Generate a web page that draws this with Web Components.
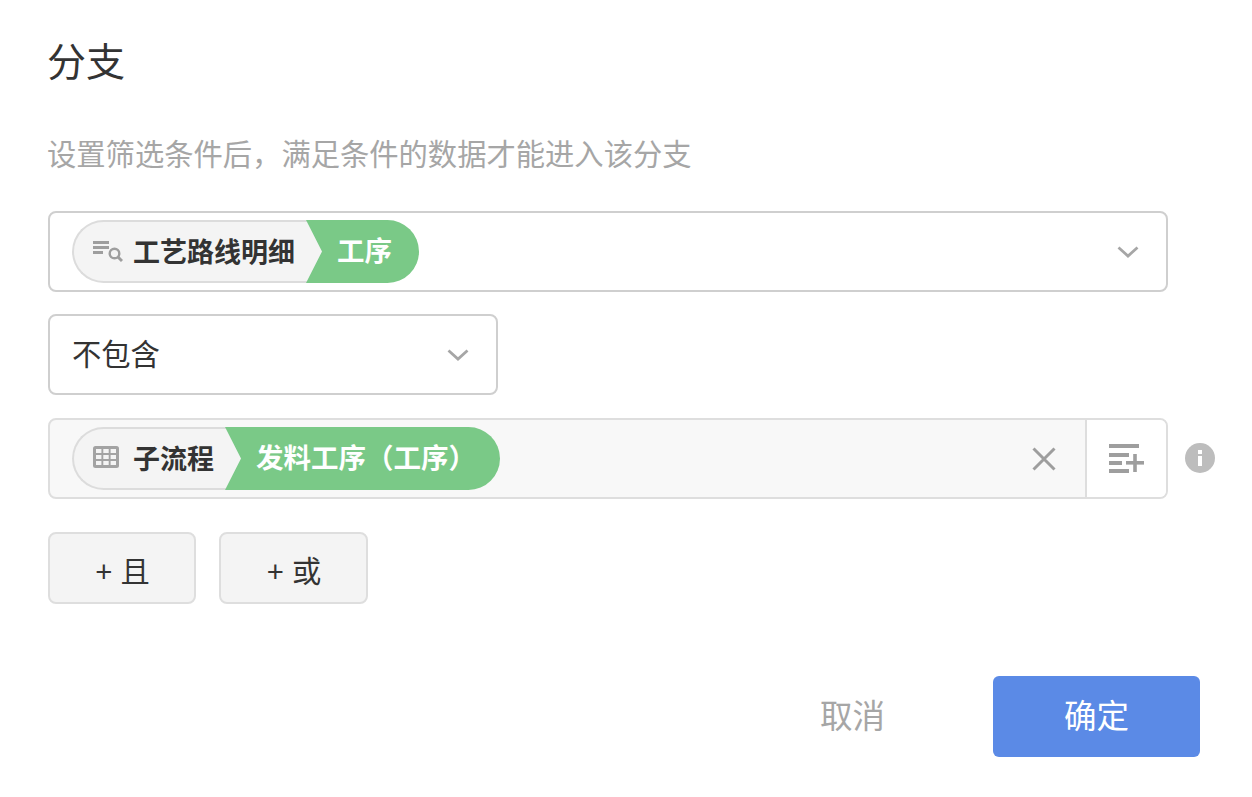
<!DOCTYPE html>
<html lang="zh">
<head>
<meta charset="utf-8">
<title>分支</title>
<style>
html, body { margin: 0; background: #fff; }
body { font-family: "Liberation Sans", "Noto Sans CJK SC", sans-serif; color: #333; }
</style>
</head>
<body>
<branch-dialog></branch-dialog>
<script>
const ICONS = {
    search: '<svg width="30" height="24" viewBox="0 0 30 24"><g fill="#9e9e9e"><rect x="0" y="1" width="16" height="3"/><rect x="0" y="6" width="16" height="3"/><rect x="0" y="11" width="10" height="3"/></g><circle cx="21.5" cy="13.5" r="4.8" fill="none" stroke="#9e9e9e" stroke-width="2.4"/><path d="M25 17l4 4" stroke="#9e9e9e" stroke-width="3"/></svg>',
    table: '<svg width="26" height="22" viewBox="0 0 26 22"><rect width="26" height="22" rx="2.5" fill="#a3a3a3"/><g fill="#f4f4f4"><rect x="3" y="3" width="5.4" height="4"/><rect x="10.3" y="3" width="5.4" height="4"/><rect x="17.6" y="3" width="5.4" height="4"/><rect x="3" y="9" width="5.4" height="4"/><rect x="10.3" y="9" width="5.4" height="4"/><rect x="17.6" y="9" width="5.4" height="4"/><rect x="3" y="15" width="5.4" height="4"/><rect x="10.3" y="15" width="5.4" height="4"/><rect x="17.6" y="15" width="5.4" height="4"/></g></svg>',
    chevron: '<svg width="22" height="12" viewBox="0 0 22 12"><path d="M1.5 1.5L11 10l9.5-8.5" fill="none" stroke="#a6a6a6" stroke-width="2.8"/></svg>',
    close: '<svg width="24" height="24" viewBox="0 0 24 24"><path d="M1.5 1.5l21 21M22.5 1.5l-21 21" stroke="#9e9e9e" stroke-width="3"/></svg>',
    addList: '<svg width="36" height="30" viewBox="0 0 36 30"><g fill="#9e9e9e"><rect x="0" y="0" width="30" height="4"/><rect x="0" y="9" width="20" height="4"/><rect x="0" y="17" width="13" height="4"/><rect x="0" y="25" width="20" height="4"/><rect x="17" y="17" width="18" height="3.6"/><rect x="24.2" y="10" width="3.6" height="18"/></g></svg>',
    info: '<svg width="30" height="30" viewBox="0 0 30 30"><circle cx="15" cy="15" r="15" fill="#bdbdbd"/><rect x="13" y="7" width="4" height="4" fill="#fff"/><rect x="13" y="13" width="4" height="10" fill="#fff"/></svg>'
};

class FieldChip extends HTMLElement {
    connectedCallback() {
        const root = this.attachShadow({ mode: 'open' });
        root.innerHTML = `<style>
            :host { display: inline-flex; height: 63px; font-size: 27px; font-weight: 700; line-height: 63px; }
            .source { display: flex; align-items: center; gap: var(--icon-gap, 12px); box-sizing: border-box; height: 63px;
                padding: 0 29px 0 19px; background: #f4f4f4; border: 2px solid #dcdcdc; border-right: 0; border-radius: 32px 0 0 32px; color: #333; }
            .source span { padding-top: 4px; }
            .value { height: 63px; margin-left: -18px; padding: 0 var(--value-right, 27px) 0 31px; background: #7ac987; color: #fff; font-size: 27.5px; line-height: 63px;
                border-radius: 0 32px 32px 0; clip-path: polygon(0 0, 100% 0, 100% 100%, 0 100%, 16px 50%); white-space: nowrap; }
        </style><div class="source"><slot name="icon"></slot><span>${this.getAttribute('source')}</span></div><div class="value">${this.getAttribute('value')}</div>`;
    }
}

class SelectBox extends HTMLElement {
    connectedCallback() {
        const root = this.attachShadow({ mode: 'open' });
        root.innerHTML = `<style>
            :host { display: flex; align-items: center; justify-content: space-between; box-sizing: border-box; height: 81px;
                padding: 0 27px 0 22px; border: 2px solid #cfcfcf; border-radius: 8px; background: #fff; }
            svg { display: block; }
        </style><slot></slot>${ICONS.chevron}`;
    }
}

class ValueBox extends HTMLElement {
    connectedCallback() {
        const root = this.attachShadow({ mode: 'open' });
        root.innerHTML = `<style>
            :host { display: flex; flex: none; box-sizing: border-box; width: 1120px; height: 81px; border: 2px solid #dedede; border-radius: 8px; background: #f8f8f8; }
            .main { flex: 1; display: flex; align-items: center; justify-content: space-between; padding: 0 29px 0 22px; }
            .side { flex: none; width: 81px; display: flex; align-items: center; justify-content: center; background: #fff; border-left: 2px solid #dedede; border-radius: 0 6px 6px 0; box-sizing: border-box; }
            svg { display: block; }
        </style><div class="main"><slot></slot>${ICONS.close}</div><div class="side">${ICONS.addList}</div>`;
    }
}

class BranchDialog extends HTMLElement {
    connectedCallback() {
        const root = this.attachShadow({ mode: 'open' });
        root.innerHTML = `<style>
            :host { display: block; box-sizing: border-box; width: 1252px; height: 797px; padding: 36px 52px 0 48px; color: #333;
                font-family: "Liberation Sans", "Noto Sans CJK SC", sans-serif; }
            h1 { margin: 0 0 0 -1px; font-size: 39px; font-weight: 400; line-height: 54px; }
            p { margin: 44px 0 0 -1px; font-size: 29.3px; line-height: 42px; color: #a6a6a6; white-space: nowrap; }
            .fields { margin-top: 35px; display: flex; flex-direction: column; gap: 22px; }
            .row { display: flex; align-items: center; gap: 17px; margin-top: 1px; }
            .wide { width: 1120px; }
            .narrow { width: 450px; font-size: 29.3px; }
            .narrow .label { display: block; margin: 0 0 6px 0; }
            .logic { display: flex; gap: 23px; margin-top: 33px; }
            .logic span { display: flex; align-items: center; justify-content: center; box-sizing: border-box; height: 72px; width: 148px; padding: 2px 0 0 1px;
                font-size: 29.3px; background: #f4f4f4; border: 2px solid #dedede; border-radius: 8px; }
            .logic span + span { width: 149px; }
            footer { display: flex; justify-content: flex-end; align-items: center; gap: 108px; margin-top: 72px; font-size: 32.5px; line-height: 40px; }
            .cancel { color: #a6a6a6; }
            .ok { display: flex; align-items: center; justify-content: center; box-sizing: border-box; width: 207px; height: 81px; background: #5b8ae6; color: #fff; border-radius: 6px; }
            svg { display: block; }
            .info { flex: none; margin-bottom: 2px; }
            .raise { margin-bottom: 4px; }
        </style>
        <h1>分支</h1>
        <p>设置筛选条件后，满足条件的数据才能进入该分支</p>
        <div class="fields">
            <select-box class="wide"><field-chip style="--icon-gap:10px" source="工艺路线明细" value="工序"><span slot="icon">${ICONS.search}</span></field-chip></select-box>
            <select-box class="narrow"><span class="label">不包含</span></select-box>
            <div class="row">
                <value-box><field-chip style="--icon-gap:14px;--value-right:24px" source="子流程" value="发料工序（工序）"><span slot="icon" class="raise">${ICONS.table}</span></field-chip></value-box>
                <span class="info">${ICONS.info}</span>
            </div>
        </div>
        <div class="logic"><span>+ 且</span><span>+ 或</span></div>
        <footer><span class="cancel">取消</span><span class="ok">确定</span></footer>`;
    }
}

customElements.define('field-chip', FieldChip);
customElements.define('select-box', SelectBox);
customElements.define('value-box', ValueBox);
customElements.define('branch-dialog', BranchDialog);
</script>
</body>
</html>
